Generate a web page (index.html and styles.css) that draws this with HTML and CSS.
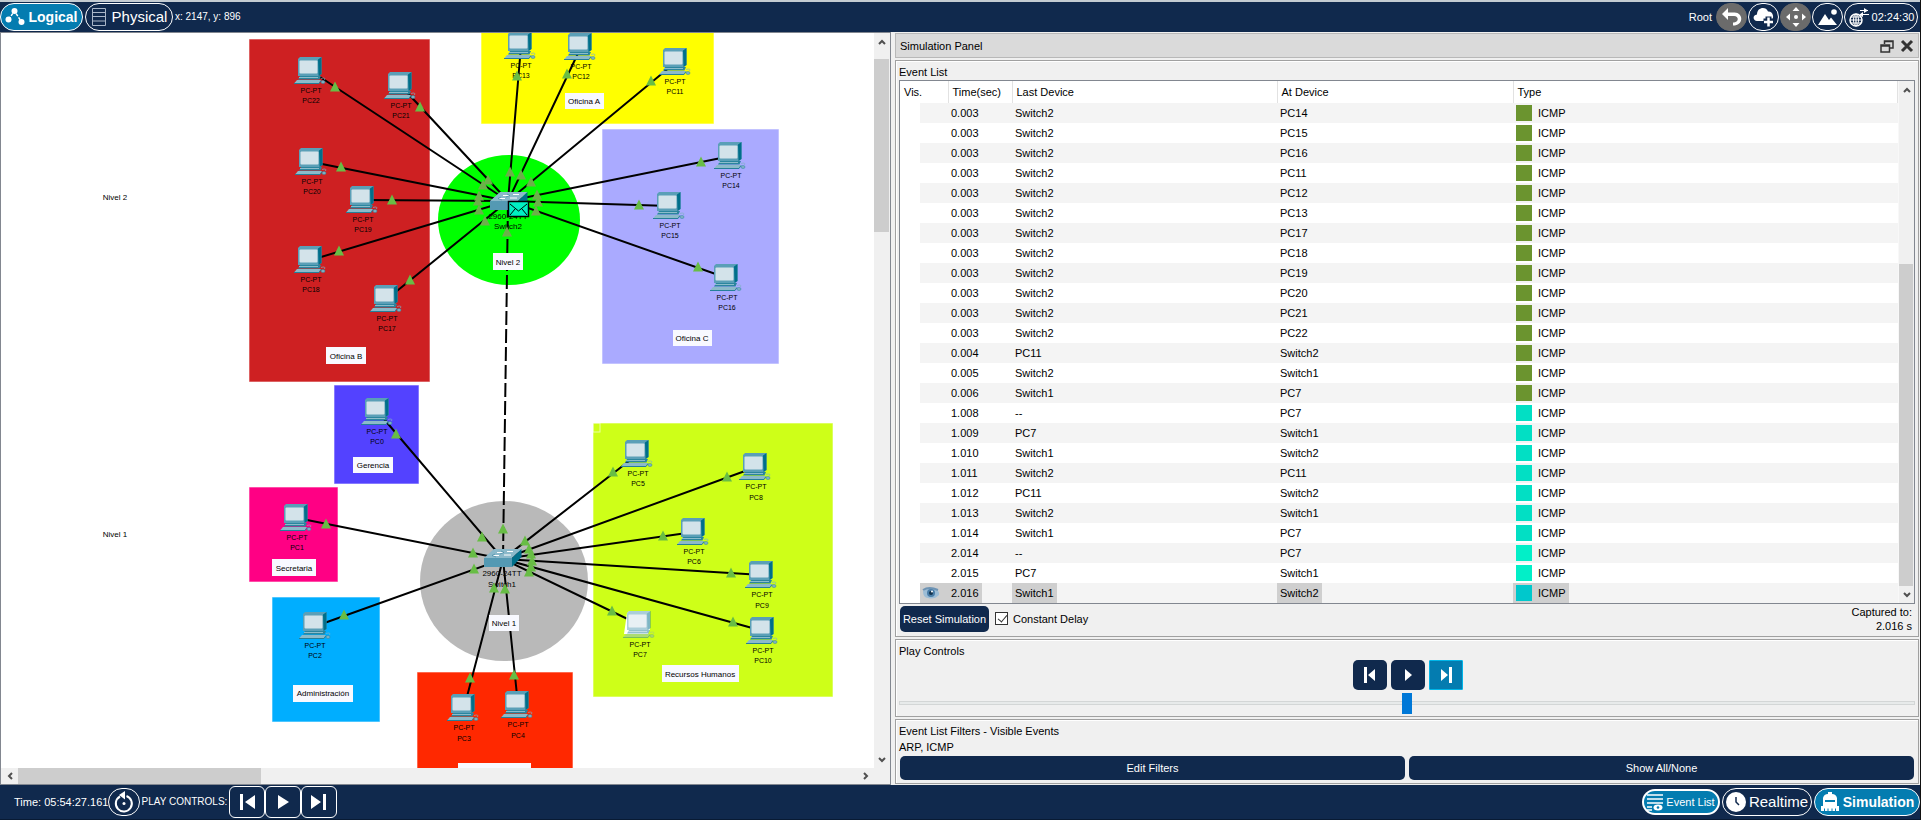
FILE: index.html
```html
<!DOCTYPE html>
<html lang="es">
<head>
<meta charset="utf-8">
<title>Network simulator</title>
<link rel="stylesheet" href="styles.css">
</head>
<body>
<div class="app">
  <header class="bar top-bar">
    <button class="pill active mode"><svg width="20" height="20" viewBox="0 0 20 20"><path d="M3.500 12.500L9.500 4L16.500 15" fill="none" stroke="#fff" stroke-width="1.500" stroke-dasharray="3 1.500"/><circle cx="3.500" cy="12.500" r="3" fill="#fff"/><circle cx="9.500" cy="4" r="3" fill="#fff"/><circle cx="16.500" cy="15" r="3" fill="#fff"/></svg><b>Logical</b></button>
    <button class="pill mode physical"><svg width="16" height="20" viewBox="0 0 16 20" fill="none" stroke="#a9b6c8"><path d="M1.500 1.500H14.500V18.500H1.500ZM1.500 5.500H14.500M1.500 9.500H14.500M1.500 14H14.500"/></svg><span>Physical</span></button>
    <span class="coords">x: 2147, y: 896</span>
    <div class="top-tools">
      <span class="root">Root</span>
      <button class="round grey" aria-label="Back"><svg width="22" height="18" viewBox="0 0 22 18"><path d="M7 0L1 6L7 12V8H13C18 8 18 14 13 14.500H12V17.500H14C23 16 22 4 13 4.500H7Z" fill="#fff"/></svg></button>
      <button class="round" aria-label="New cluster"><svg width="24" height="22" viewBox="0 0 24 22"><path d="M5 15C1 15 0 9 5 8.500C5 1 14 0 16 5.500C21 5 23 12 19 15Z" fill="#fff"/><path d="M16.500 10.500V20.500M11.500 15.500H21.500" stroke="#10294d" stroke-width="6"/><path d="M16.500 11.500V20.500M12 16H21" stroke="#fff" stroke-width="2.500"/></svg></button>
      <button class="round grey" aria-label="Move"><svg width="22" height="22" viewBox="0 0 22 22" fill="#fff"><path d="M11 1L14.500 5H7.500ZM11 21L14.500 17H7.500ZM1 11L5 7.500V14.500ZM21 11L17 7.500V14.500Z"/><circle cx="11" cy="11" r="2"/></svg></button>
      <button class="round" aria-label="Background"><svg width="22" height="20" viewBox="0 0 22 20" fill="#fff"><path d="M1 18L8 7L12 13L14 10.500L20 18Z"/><circle cx="17" cy="5" r="2.800"/></svg></button>
      <button class="pill clock"><svg width="22" height="22" viewBox="0 0 22 22"><g fill="none" stroke="#fff"><circle cx="8" cy="14" r="6" stroke-width="1.500"/><ellipse cx="8" cy="14" rx="2.500" ry="6"/><path d="M2 14H14M3 11H13M3 17H13M8 8V20M12 4.500H20M13 8.500H21" stroke-width="1.200"/></g><path d="M16 2L20 4.500L16 7ZM15 6L11.500 8.500L15 11Z" fill="#fff"/></svg><span>02:24:30</span></button>
    </div>
  </header>

  <main class="work">
    <section class="canvas" aria-label="Workspace">
      <svg class="map" width="100%" height="100%">
        <defs>
          <g id="pc">
            <path d="M4 2L6 0H27.500V17L25 19H4Z" fill="#5a9fb7"/>
            <path d="M24 2.500L27.500 0V17L24.500 19Z" fill="#006f8a"/>
            <rect x="5.500" y="3.500" width="18" height="13" rx="1" fill="#d3e3ea"/>
            <path d="M6 19H27L25.500 22.500H4Z" fill="#2b859e"/>
            <path d="M5 20.500H24" stroke="#8cbccb"/>
            <path d="M3 23H27L25 26.500H0Z" fill="#8cbac9"/>
            <path d="M0 26.500H25L27 23.500" fill="none" stroke="#257f99"/>
            <path d="M27 21.500Q32 20 30.500 23" fill="none" stroke="#7fb2c4" stroke-width=".7"/>
            <ellipse cx="29" cy="25" rx="2" ry="1.500" fill="#7fb2c4" stroke="#2b859e" stroke-width=".5"/>
          </g>
          <g id="switch">
            <path d="M10 0H37.500L28 9H0Z" fill="#8bb9ca"/>
            <path d="M0 9H28V18H0Z" fill="#5499b3"/>
            <path d="M28 9L37.500 0V8L28 18Z" fill="#006f8a"/>
            <path d="M13 3.500H19M23 2.500H29M9 6.500H15M20 6H27" stroke="#fff"/>
            <path d="M17 2L20 3.500L16 5M11 5L8 6.500L12 8" fill="none" stroke="#4b8ea8" stroke-width=".7"/>
          </g>
          <path id="up" d="M0 -5.500L5 4.500H-5Z"/>
        </defs>
        <g transform="translate(-1 -33)">
          <g stroke="#fff" stroke-opacity=".6">
            <rect x="249" y="39" width="181" height="343" fill="#ce2022"/>
            <rect x="481" y="20" width="233" height="104" fill="#ff0"/>
            <rect x="602" y="129" width="177" height="235" fill="#aaf"/>
            <rect x="334" y="385" width="85" height="99" fill="#5342ff"/>
            <rect x="249" y="487" width="89" height="95" fill="#ff0084"/>
            <rect x="272" y="597" width="108" height="125" fill="#00aeff"/>
            <rect x="417" y="672" width="156" height="110" fill="#ff2800"/>
            <rect x="593" y="423" width="240" height="274" fill="#ceff18"/>
            <rect x="593" y="423" width="7" height="9" fill="none"/>
          </g>
          <ellipse cx="509" cy="220" rx="71" ry="65" fill="#0f0"/>
          <ellipse cx="504" cy="581" rx="84" ry="80" fill="#b9b9b9"/>

          <g class="device-text">
            <text x="311" y="93">PC-PT</text><text x="311" y="103">PC22</text>
            <text x="401" y="108">PC-PT</text><text x="401" y="118">PC21</text>
            <text x="312" y="184">PC-PT</text><text x="312" y="194">PC20</text>
            <text x="363" y="222">PC-PT</text><text x="363" y="232">PC19</text>
            <text x="311" y="282">PC-PT</text><text x="311" y="292">PC18</text>
            <text x="387" y="321">PC-PT</text><text x="387" y="331">PC17</text>
            <text x="521" y="68">PC-PT</text><text x="521" y="78">PC13</text>
            <text x="581" y="69">PC-PT</text><text x="581" y="79">PC12</text>
            <text x="675" y="84">PC-PT</text><text x="675" y="94">PC11</text>
            <text x="731" y="178">PC-PT</text><text x="731" y="188">PC14</text>
            <text x="670" y="228">PC-PT</text><text x="670" y="238">PC15</text>
            <text x="727" y="300">PC-PT</text><text x="727" y="310">PC16</text>
            <text x="377" y="434">PC-PT</text><text x="377" y="444">PC0</text>
            <text x="297" y="540">PC-PT</text><text x="297" y="550">PC1</text>
            <text x="315" y="648">PC-PT</text><text x="315" y="658">PC2</text>
            <text x="464" y="730">PC-PT</text><text x="464" y="741">PC3</text>
            <text x="518" y="727">PC-PT</text><text x="518" y="738">PC4</text>
            <text x="638" y="476">PC-PT</text><text x="638" y="486">PC5</text>
            <text x="756" y="489">PC-PT</text><text x="756" y="500">PC8</text>
            <text x="694" y="554">PC-PT</text><text x="694" y="564">PC6</text>
            <text x="762" y="597">PC-PT</text><text x="762" y="608">PC9</text>
            <text x="640" y="647">PC-PT</text><text x="640" y="657">PC7</text>
            <text x="763" y="653">PC-PT</text><text x="763" y="663">PC10</text>
          </g>
          <g class="note-text">
            <text x="508" y="219">2960-24TT</text><text x="508" y="229">Switch2</text>
            <text x="502" y="576">2960-24TT</text><text x="502" y="587">Switch1</text>
            <text x="115" y="200">Nivel 2</text><text x="115" y="537">Nivel 1</text>
          </g>

          <path d="M503 559L508 201" stroke="#000" stroke-width="2" stroke-dasharray="14 4"/>
          <path fill="none" stroke="#000" stroke-width="2" d="M311 71L508 201L401 86M312 162L508 201L363 200M311 260L508 201L387 299M521 46L508 201L581 47M676 62L508 201L731 156M670 206L508 201L727 278M378 412L503 559L297 518M316 626L503 559L464 708M518 705L503 559L638 454M756 467L503 559L694 532M762 575L503 559L640 625M763 631L503 559"/>

          <use href="#pc" x="294" y="57"/><use href="#pc" x="384" y="72"/><use href="#pc" x="295" y="148"/>
          <use href="#pc" x="346" y="186"/><use href="#pc" x="294" y="246"/><use href="#pc" x="370" y="285"/>
          <use href="#pc" x="504" y="32"/><use href="#pc" x="564" y="33"/><use href="#pc" x="659" y="48"/>
          <use href="#pc" x="714" y="142"/><use href="#pc" x="653" y="192"/><use href="#pc" x="710" y="264"/>
          <use href="#pc" x="361" y="398"/><use href="#pc" x="280" y="504"/><use href="#pc" x="299" y="612"/>
          <use href="#pc" x="447" y="694"/><use href="#pc" x="501" y="691"/><use href="#pc" x="621" y="440"/>
          <use href="#pc" x="739" y="453"/><use href="#pc" x="677" y="518"/><use href="#pc" x="745" y="561"/>
          <g><path d="M627 613L629 611H650V629L648 634H624Z" fill="#fff"/><use href="#pc" x="623" y="611" opacity=".5"/></g>
          <use href="#pc" x="746" y="617"/>
          <use href="#switch" x="490" y="192"/><use href="#switch" x="484" y="549"/>

          <g fill="#68bd45">
            <use href="#up" x="335" y="87"/><use href="#up" x="420" y="107"/><use href="#up" x="341" y="167"/>
            <use href="#up" x="392" y="200"/><use href="#up" x="339" y="251"/><use href="#up" x="410" y="280"/>
            <use href="#up" x="517" y="76"/><use href="#up" x="567" y="74"/><use href="#up" x="651" y="81"/>
            <use href="#up" x="701" y="162"/><use href="#up" x="639" y="205"/><use href="#up" x="698" y="267"/>
            <use href="#up" x="482" y="537"/><use href="#up" x="503" y="529"/><use href="#up" x="473" y="553"/>
            <use href="#up" x="474" y="569"/><use href="#up" x="494" y="588"/><use href="#up" x="505" y="589"/>
            <use href="#up" x="525" y="541"/><use href="#up" x="529" y="549"/><use href="#up" x="531" y="554"/>
            <use href="#up" x="532" y="561"/><use href="#up" x="531" y="567"/><use href="#up" x="529" y="572"/>
            <use href="#up" x="396" y="434"/><use href="#up" x="326" y="524"/><use href="#up" x="344" y="615"/>
            <use href="#up" x="470" y="678"/><use href="#up" x="514" y="675"/><use href="#up" x="613" y="472"/>
            <use href="#up" x="727" y="477"/><use href="#up" x="663" y="536"/><use href="#up" x="731" y="573"/>
            <use href="#up" x="612" y="611"/><use href="#up" x="733" y="622"/>
          </g>
          <g fill="#6cb04a">
            <use href="#up" x="510" y="172"/><use href="#up" x="521" y="175"/><use href="#up" x="531" y="182"/>
            <use href="#up" x="537" y="195"/><use href="#up" x="538" y="202"/><use href="#up" x="536" y="211"/>
            <use href="#up" x="488" y="180"/><use href="#up" x="483" y="185"/><use href="#up" x="479" y="196"/>
            <use href="#up" x="478" y="201"/><use href="#up" x="479" y="210"/><use href="#up" x="485" y="221"/>
            <use href="#up" x="507" y="232"/>
          </g>
          <rect x="508.500" y="201.500" width="20" height="15" fill="#00efc3" stroke="#000" stroke-width="1.500"/>
          <path d="M510 204L518.500 211L527 204M510 215L515 209M527 215L522 209" fill="none" stroke="#000"/>

          <g fill="#f8f9ff">
            <rect x="326" y="347" width="40" height="17"/><rect x="565" y="93" width="39" height="16"/>
            <rect x="493" y="253" width="30" height="17"/><rect x="673" y="330" width="39" height="16"/>
            <rect x="353" y="457" width="40" height="16"/><rect x="272" y="559" width="44" height="17"/>
            <rect x="293" y="685" width="60" height="17"/><rect x="489" y="615" width="30" height="16"/>
            <rect x="662" y="665" width="77" height="17"/><rect x="458" y="763" width="73" height="17"/>
          </g>
          <g class="note-text">
            <text x="346" y="359">Oficina B</text><text x="584" y="104">Oficina A</text>
            <text x="508" y="265">Nivel 2</text><text x="692" y="341">Oficina C</text>
            <text x="373" y="468">Gerencia</text><text x="294" y="571">Secretaria</text>
            <text x="323" y="696">Administración</text><text x="504" y="626">Nivel 1</text>
            <text x="700" y="677">Recursos Humanos</text>
          </g>
        </g>
      </svg>
      <div class="scroll vertical map-v">
        <button aria-label="Up"><svg width="8" height="6"><path d="M1 5L4 2L7 5" /></svg></button>
        <div class="track"><div class="thumb"></div></div>
        <button aria-label="Down"><svg width="8" height="6"><path d="M1 1L4 4L7 1"/></svg></button>
      </div>
      <div class="scroll horizontal map-h">
        <button aria-label="Left"><svg width="6" height="8"><path d="M5 1L2 4L5 7"/></svg></button>
        <div class="track"><div class="thumb"></div></div>
        <button aria-label="Right"><svg width="6" height="8"><path d="M1 1L4 4L1 7"/></svg></button>
      </div>
      <div class="corner"></div>
    </section>

    <aside class="panel">
      <div class="panel-title"><span>Simulation Panel</span>
        <div class="window-tools">
          <button aria-label="Float"><svg width="14" height="14" fill="none" stroke="#333" stroke-width="1.500"><path d="M4.500 5V2H13V9H10M4 2.500H13M1 6H9.500V13H1ZM1 7H9.500"/></svg></button>
          <button aria-label="Close"><svg width="14" height="14" stroke="#333" stroke-width="3"><path d="M2 2L12 12M12 2L2 12"/></svg></button>
        </div>
      </div>

      <section class="group events">
        <div class="label">Event List</div>
        <div class="list">
          <table>
            <colgroup><col class="c-vis"><col class="c-time"><col class="c-last"><col class="c-at"><col></colgroup>
            <thead><tr><th>Vis.</th><th>Time(sec)</th><th>Last Device</th><th>At Device</th><th>Type</th></tr></thead>
            <tbody>
              <tr><td><div></div></td><td><span>0.003</span></td><td><span>Switch2</span></td><td><span>PC14</span></td><td><span><i class="olive"></i>ICMP</span></td></tr>
              <tr><td><div></div></td><td><span>0.003</span></td><td><span>Switch2</span></td><td><span>PC15</span></td><td><span><i class="olive"></i>ICMP</span></td></tr>
              <tr><td><div></div></td><td><span>0.003</span></td><td><span>Switch2</span></td><td><span>PC16</span></td><td><span><i class="olive"></i>ICMP</span></td></tr>
              <tr><td><div></div></td><td><span>0.003</span></td><td><span>Switch2</span></td><td><span>PC11</span></td><td><span><i class="olive"></i>ICMP</span></td></tr>
              <tr><td><div></div></td><td><span>0.003</span></td><td><span>Switch2</span></td><td><span>PC12</span></td><td><span><i class="olive"></i>ICMP</span></td></tr>
              <tr><td><div></div></td><td><span>0.003</span></td><td><span>Switch2</span></td><td><span>PC13</span></td><td><span><i class="olive"></i>ICMP</span></td></tr>
              <tr><td><div></div></td><td><span>0.003</span></td><td><span>Switch2</span></td><td><span>PC17</span></td><td><span><i class="olive"></i>ICMP</span></td></tr>
              <tr><td><div></div></td><td><span>0.003</span></td><td><span>Switch2</span></td><td><span>PC18</span></td><td><span><i class="olive"></i>ICMP</span></td></tr>
              <tr><td><div></div></td><td><span>0.003</span></td><td><span>Switch2</span></td><td><span>PC19</span></td><td><span><i class="olive"></i>ICMP</span></td></tr>
              <tr><td><div></div></td><td><span>0.003</span></td><td><span>Switch2</span></td><td><span>PC20</span></td><td><span><i class="olive"></i>ICMP</span></td></tr>
              <tr><td><div></div></td><td><span>0.003</span></td><td><span>Switch2</span></td><td><span>PC21</span></td><td><span><i class="olive"></i>ICMP</span></td></tr>
              <tr><td><div></div></td><td><span>0.003</span></td><td><span>Switch2</span></td><td><span>PC22</span></td><td><span><i class="olive"></i>ICMP</span></td></tr>
              <tr><td><div></div></td><td><span>0.004</span></td><td><span>PC11</span></td><td><span>Switch2</span></td><td><span><i class="olive"></i>ICMP</span></td></tr>
              <tr><td><div></div></td><td><span>0.005</span></td><td><span>Switch2</span></td><td><span>Switch1</span></td><td><span><i class="olive"></i>ICMP</span></td></tr>
              <tr><td><div></div></td><td><span>0.006</span></td><td><span>Switch1</span></td><td><span>PC7</span></td><td><span><i class="olive"></i>ICMP</span></td></tr>
              <tr><td><div></div></td><td><span>1.008</span></td><td><span>--</span></td><td><span>PC7</span></td><td><span><i class="teal"></i>ICMP</span></td></tr>
              <tr><td><div></div></td><td><span>1.009</span></td><td><span>PC7</span></td><td><span>Switch1</span></td><td><span><i class="teal"></i>ICMP</span></td></tr>
              <tr><td><div></div></td><td><span>1.010</span></td><td><span>Switch1</span></td><td><span>Switch2</span></td><td><span><i class="teal"></i>ICMP</span></td></tr>
              <tr><td><div></div></td><td><span>1.011</span></td><td><span>Switch2</span></td><td><span>PC11</span></td><td><span><i class="teal"></i>ICMP</span></td></tr>
              <tr><td><div></div></td><td><span>1.012</span></td><td><span>PC11</span></td><td><span>Switch2</span></td><td><span><i class="teal"></i>ICMP</span></td></tr>
              <tr><td><div></div></td><td><span>1.013</span></td><td><span>Switch2</span></td><td><span>Switch1</span></td><td><span><i class="teal"></i>ICMP</span></td></tr>
              <tr><td><div></div></td><td><span>1.014</span></td><td><span>Switch1</span></td><td><span>PC7</span></td><td><span><i class="teal"></i>ICMP</span></td></tr>
              <tr><td><div></div></td><td><span>2.014</span></td><td><span>--</span></td><td><span>PC7</span></td><td><span><i class="mint"></i>ICMP</span></td></tr>
              <tr><td><div></div></td><td><span>2.015</span></td><td><span>PC7</span></td><td><span>Switch1</span></td><td><span><i class="mint"></i>ICMP</span></td></tr>
              <tr class="selected"><td><div><svg width="18" height="14" viewBox="0 0 18 14"><path d="M1 5Q6 0 13 3Q18 5 17 9Q12 14 6 12Q1 12 1 5Z" fill="#9dbdd6"/><path d="M1 4Q7 0 16 4" fill="none" stroke="#6d93b4" stroke-width="2"/><circle cx="9" cy="7" r="4" fill="#4b7ea8"/><circle cx="9" cy="7" r="2" fill="#14344f"/><circle cx="10" cy="5.500" r="1" fill="#fff"/></svg></div></td><td><span>2.016</span></td><td><span>Switch1</span></td><td><span>Switch2</span></td><td><span><i class="cyan"></i>ICMP</span></td></tr>
            </tbody>
          </table>
          <div class="scroll vertical list-v">
            <button aria-label="Up"><svg width="8" height="6"><path d="M1 5L4 2L7 5"/></svg></button>
            <div class="track"><div class="thumb"></div></div>
            <button aria-label="Down"><svg width="8" height="6"><path d="M1 1L4 4L7 1"/></svg></button>
          </div>
        </div>
        <div class="list-footer">
          <button class="navy reset">Reset Simulation</button>
          <input type="checkbox" id="delay" checked><label for="delay">Constant Delay</label>
          <div class="captured">Captured to:<br>2.016 s</div>
        </div>
      </section>

      <section class="group play">
        <label class="label" for="speed">Play Controls</label>
        <div class="play-buttons">
          <button class="navy" aria-label="Back"><svg width="14" height="18" fill="#fff"><path d="M1 1H4V17H1ZM12 3V15L5 9Z"/></svg></button>
          <button class="navy" aria-label="Play"><svg width="14" height="18" fill="#fff"><path d="M4 3L11 9L4 15Z"/></svg></button>
          <button class="navy current" aria-label="Forward"><svg width="14" height="18" fill="#fff"><path d="M10 1H13V17H10ZM2 3L9 9L2 15Z"/></svg></button>
        </div>
        <input type="range" id="speed" min="0" max="100" value="50">
      </section>

      <section class="group filters">
        <div class="label">Event List Filters - Visible Events</div>
        <div class="label">ARP, ICMP</div>
        <div class="filter-buttons"><button class="navy">Edit Filters</button><button class="navy">Show All/None</button></div>
      </section>
    </aside>
  </main>

  <footer class="bar bottom-bar">
    <span class="time">Time: 05:54:27.161</span>
    <button class="round" aria-label="Power cycle devices"><svg width="20" height="22" viewBox="0 0 20 22"><path d="M6 5.500A8 8 0 1 0 12.500 5" fill="none" stroke="#fff" stroke-width="2"/><path d="M11 0L5 4L11 8.500Z" fill="#fff"/><circle cx="10" cy="12.500" r="1.500" fill="#fff"/></svg></button>
    <span class="play-label">PLAY CONTROLS:</span>
    <div class="step-buttons">
      <button aria-label="Back"><svg width="18" height="18" fill="#fff"><path d="M2 1H5V17H2ZM17 2V16L7 9Z"/></svg></button>
      <button aria-label="Play"><svg width="18" height="18" fill="#fff"><path d="M4 2L15 9L4 16Z"/></svg></button>
      <button aria-label="Forward"><svg width="18" height="18" fill="#fff"><path d="M13 1H16V17H13ZM1 2V16L11 9Z"/></svg></button>
    </div>
    <div class="views">
      <button class="pill active event-list"><svg width="16" height="18" viewBox="0 0 16 18"><path d="M0 2H16M0 6H16M0 10H16M0 14H5M0 17H5" stroke="#fff" stroke-width="1.500"/><ellipse cx="11" cy="14.500" rx="4.500" ry="3" fill="#fff"/><circle cx="11" cy="14.500" r="1.300" fill="#047cb0"/></svg><span>Event List</span></button>
      <button class="pill mode realtime"><svg width="20" height="20" viewBox="0 0 20 20"><circle cx="10" cy="10" r="10" fill="#fff"/><path d="M10 5V10L13 13" fill="none" stroke="#10294d" stroke-width="1.500"/></svg><span>Realtime</span></button>
      <button class="pill active mode simulation"><svg width="20" height="20" viewBox="0 0 20 20"><path d="M3 14V6Q4 2 8 2V0H12V2Q16 2 17 6V14H19V19H1V14Z" fill="#fff"/><path d="M5 8H15V10H5Z" fill="#047cb0"/><path d="M4.500 19V16.500M8 19V16.500M12 19V16.500M15.500 19V16.500" stroke="#047cb0"/></svg><b>Simulation</b></button>
    </div>
  </footer>
</div>
</body>
</html>
```

FILE: styles.css
```css
* { box-sizing: border-box; }
body {
  margin: 0;
  background: #111;
  color: #000;
  font: 11px/16px "Liberation Sans", Arial, sans-serif;
}
button {
  margin: 0;
  padding: 0;
  border: 0;
  background: none;
  color: inherit;
  font: inherit;
  white-space: nowrap;
}
svg { display: block; flex: none; }

.app {
  display: flex;
  flex-direction: column;
  height: 100vh;
  margin-right: 1px;
  background: #f0f0f0;
}

/* Bars */
.bar {
  display: flex;
  flex: none;
  align-items: center;
  background: #10294d;
  color: #fff;
}
.top-bar { height: 32px; border-top: 2px solid #c4ccd2; }
.bottom-bar { height: 35px; padding: 0 0 1px 14px; border-bottom: 1px solid #081a33; }
.pill, .round {
  display: flex;
  align-items: center;
  justify-content: center;
  height: 28px;
  border: 1px solid #fff;
  border-radius: 14px;
}
.pill { gap: 3px; }
.active { background: #047cb0; }
.mode { font-size: 15px; }
.mode b { font-size: 14px; }
.top-bar .active { width: 83px; }
.physical { width: 88px; gap: 5px; margin-left: 2px; }
.coords { margin-left: 2px; font-size: 10px; }
.top-tools { display: flex; align-items: center; gap: 1px; margin-left: auto; padding-right: 2px; }
.root { margin-right: 3px; }
.round { width: 31px; }
.grey { background: #6b6b6b; border-color: #6b6b6b; }
.clock { width: 74px; gap: 2px; }

.time { width: 94px; white-space: nowrap; }
.bottom-bar .round { width: 32px; }
.play-label { width: 89px; font-size: 10px; white-space: nowrap; text-align: center; }
.step-buttons { display: flex; }
.step-buttons button {
  display: flex;
  align-items: center;
  justify-content: center;
  width: 36px;
  height: 32px;
  border: 1px solid #fff;
  border-radius: 6px;
}
.views { display: flex; align-items: center; gap: 2px; margin-left: auto; }
.event-list { width: 78px; height: 26px; border-width: 2px; }
.realtime { width: 90px; }
.simulation { width: 106px; }

/* Work area */
.work {
  display: grid;
  flex: 1;
  grid-template-rows: minmax(0, 1fr);
  grid-template-columns: minmax(0, 891fr) minmax(0, 1029fr);
  min-height: 0;
}
.canvas {
  display: grid;
  grid-template: minmax(0, 1fr) 16px / minmax(0, 1fr) 16px;
  border: 1px solid #828790;
  background: #fff;
}
.map { overflow: hidden; }
.device-text { font-size: 7px; text-anchor: middle; }
.note-text { font-size: 8px; text-anchor: middle; }
.corner { background: #f0f0f0; }

.scroll { display: flex; background: #f0f0f0; }
.scroll button { display: flex; flex: none; align-items: center; justify-content: center; }
.scroll path { fill: none; stroke: #505050; stroke-width: 2; }
.scroll .track { display: flex; flex: 1; }
.scroll .thumb { background: #cdcdcd; }
.vertical, .vertical .track { flex-direction: column; }
.vertical button { height: 17px; }
.horizontal button { width: 17px; }
.vertical .thumb { margin-right: 1px; }
.horizontal .thumb { width: 29%; }
.map-v .track { padding-top: 9px; }
.map-v .thumb { height: 25%; }

/* Simulation panel */
.panel {
  display: flex;
  flex-direction: column;
  gap: 2px;
  min-width: 0;
  padding: 1px 1px 1px 4px;
}
.panel-title {
  display: flex;
  flex: none;
  align-items: center;
  justify-content: space-between;
  height: 25px;
  padding: 0 4px;
  border: 1px solid #b8b8b8;
  background: #dadada;
}
.window-tools { display: flex; gap: 6px; }
.group {
  display: flex;
  flex: none;
  flex-direction: column;
  padding: 3px;
  border: 1px solid #a0a0a0;
  box-shadow: inset 1px 1px #fff;
}
.events { flex: 1; min-height: 0; }
.label { display: block; flex: none; line-height: 16px; }
.list {
  display: flex;
  flex: 1;
  min-height: 0;
  overflow: hidden;
  border: 1px solid #828790;
  background: #fff;
}
table {
  flex: 1;
  align-self: flex-start;
  width: 100%;
  table-layout: fixed;
  border-collapse: collapse;
}
.c-vis { width: 48px; }
.c-time { width: 64px; }
.c-last { width: 265px; }
.c-at { width: 236px; }
th {
  height: 22px;
  padding: 0 4px;
  border-right: 1px solid #e2e2e2;
  font-weight: 400;
  text-align: left;
}
td { height: 20px; padding: 0; line-height: 20px; }
td span { display: inline-flex; align-items: center; height: 20px; padding: 0 3px; vertical-align: top; }
td div { display: flex; align-items: center; height: 20px; margin-left: 20px; padding-left: 2px; }
tbody tr:nth-child(odd) td:not(:first-child),
tbody tr:nth-child(odd) td div { background: #f4f4f4; }
tbody tr.selected td div,
.selected span { background: #cfcfcf; }
td i { width: 16px; height: 16px; margin-right: 6px; }
.olive { background: #6b942f; }
.teal { background: #02dfc4; }
.mint { background: #02efc8; }
.cyan { background: #00c8cc; }
.list-v { width: 16px; border-left: 1px solid #f8f8f8; }
.list-v .track { justify-content: flex-end; }
.list-v .thumb { height: 66%; }

.list-footer { display: flex; flex: none; align-items: center; height: 29px; }
.navy { border-radius: 5px; background: #10294d; color: #fff; }
.reset { width: 89px; height: 26px; margin-left: 1px; }
.list-footer input {
  width: 13px;
  height: 13px;
  margin: 0 5px 0 6px;
  appearance: none;
  border: 1px solid #333;
  background: #fff;
}
.list-footer input:checked::before {
  content: "";
  display: block;
  width: 4px;
  height: 8px;
  margin: 0 0 0 4px;
  border: solid #333;
  border-width: 0 1px 1px 0;
  transform: rotate(40deg);
}
.captured { margin-left: auto; padding-right: 3px; line-height: 14px; text-align: right; }

.play-buttons { display: flex; justify-content: center; gap: 4px; padding: 1px 0 0 2px; }
.play-buttons button { display: flex; align-items: center; justify-content: center; width: 34px; height: 30px; }
.play-buttons .current { border: 1px solid #00b5e8; border-radius: 1px; background: #047cb0; }
.play { height: 78px; }
.play input { width: 100%; height: 21px; margin: 2px 0 0; appearance: none; background: none; }
.play input::-webkit-slider-runnable-track { height: 4px; border: 1px solid #d3d6d6; background: #e7eaea; }
.play input::-webkit-slider-thumb {
  width: 10px;
  height: 21px;
  margin-top: -9px;
  appearance: none;
  background: #0078d7;
}

.filters { height: 65px; }
.filter-buttons { display: grid; grid-template-columns: 1fr 1fr; gap: 4px; margin: 1px; }
.filter-buttons button { height: 24px; }
```
